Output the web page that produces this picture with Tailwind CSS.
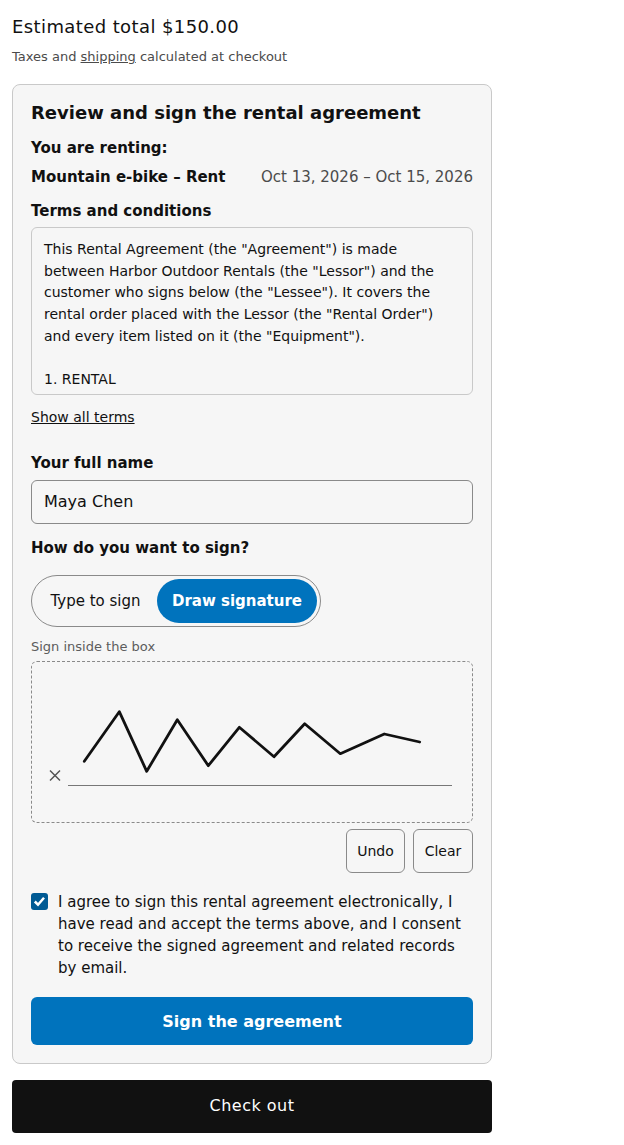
<!doctype html>
<html><head><meta charset="utf-8"><script src="https://cdn.jsdelivr.net/npm/@tailwindcss/browser@4"></script></head>
<body class="bg-white font-['DejaVu_Sans',sans-serif] text-[#111111]">
<div class="w-[480px] ml-3 pt-4">
<p class="text-[18px] leading-[22px] tracking-[0.4px]">Estimated total $150.00</p>
<p class="mt-[9px] text-[13px] leading-5 text-[#4b4b4b]">Taxes and <span class="underline">shipping</span> calculated at checkout</p>
<div class="mt-[17px] h-[980px] border border-[#c9c9c9] rounded-lg bg-[#f6f6f6] px-[18px] pt-[17px]">
<h2 class="text-[18px] leading-[22px] font-bold">Review and sign the rental agreement</h2>
<p class="mt-[14px] text-[15px] leading-5 font-bold">You are renting:</p>
<div class="mt-[9px] flex justify-between text-[15px] leading-5"><span class="font-bold">Mountain e-bike – Rent</span><span class="text-[#4b4b4b]">Oct 13, 2026 – Oct 15, 2026</span></div>
<p class="mt-[14px] text-[15px] leading-5 font-bold">Terms and conditions</p>
<div class="mt-[6px] h-[168px] overflow-hidden border border-[#c9c9c9] rounded-md px-3 pt-[11px] text-sm leading-[21.7px]">This Rental Agreement (the "Agreement") is made between Harbor Outdoor Rentals (the "Lessor") and the customer who signs below (the "Lessee"). It covers the rental order placed with the Lessor (the "Rental Order") and every item listed on it (the "Equipment").<br><br>1. RENTAL</div>
<p class="mt-3 text-sm leading-5 underline">Show all terms</p>
<p class="mt-[26px] text-[15px] leading-5 font-bold">Your full name</p>
<div class="mt-[7px] h-11 flex items-center border border-[#8a8a8a] rounded-md px-3 text-base">Maya Chen</div>
<p class="mt-[14px] text-[15px] leading-5 font-bold">How do you want to sign?</p>
<div class="mt-[17px] w-[290px] h-[52px] border border-[#8a8a8a] rounded-full flex items-center p-1 text-[15px]"><span class="w-[121px] shrink-0 pr-[2px] text-center">Type to sign</span><span class="w-[160px] shrink-0 h-[44px] rounded-full bg-[#0073bd] text-white font-bold flex items-center justify-center">Draw signature</span></div>
<p class="mt-[10px] text-[13px] leading-5 text-[#5c5c5c]">Sign inside the box</p>
<div class="mt-1 h-[162px] relative border border-dashed border-[#8a8a8a] rounded-md">
<svg class="absolute left-0 top-0" width="440" height="160" fill="none"><path d="M52.300 99.300 L87.300 49.700 L114.700 109.300 L145.300 57.700 L176.300 103.700 L207.300 65.300 L242 94.700 L272.700 61.700 L308.300 91.700 L352.300 72 L387.700 80" stroke="#111" stroke-width="2.800" stroke-linejoin="round" stroke-linecap="round"/><path d="M36 123.500H420" stroke="#777"/><path d="M18 108.500l10 10M28 108.500l-10 10" stroke="#555" stroke-width="1.500"/></svg>
</div>
<div class="mt-[6px] flex justify-end gap-2 text-sm"><span class="w-[59px] h-11 flex items-center justify-center border border-[#8a8a8a] rounded-md">Undo</span><span class="w-[60px] h-11 flex items-center justify-center border border-[#8a8a8a] rounded-md">Clear</span></div>
<div class="mt-[18px] flex gap-[10px] text-[15px] leading-[22px]"><span class="shrink-0 mt-[2px] w-[17px] h-[17px] rounded-[3px] bg-[#005a94] flex items-center justify-center"><svg width="13" height="13" viewBox="0 0 13 13" fill="none"><path d="M1.800 6.500l3.200 3.200 6-7" stroke="#fff" stroke-width="2.500"/></svg></span><p>I agree to sign this rental agreement electronically, I have read and accept the terms above, and I consent to receive the signed agreement and related records by email.</p></div>
<div class="mt-[18px] h-12 pt-[2px] rounded-md bg-[#0073bd] text-white font-bold text-base flex items-center justify-center">Sign the agreement</div>
</div>
<div class="mt-4 h-[53px] pb-[2px] rounded bg-[#111111] text-white flex items-center justify-center text-base tracking-[0.5px]">Check out</div>
</div>
</body></html>
